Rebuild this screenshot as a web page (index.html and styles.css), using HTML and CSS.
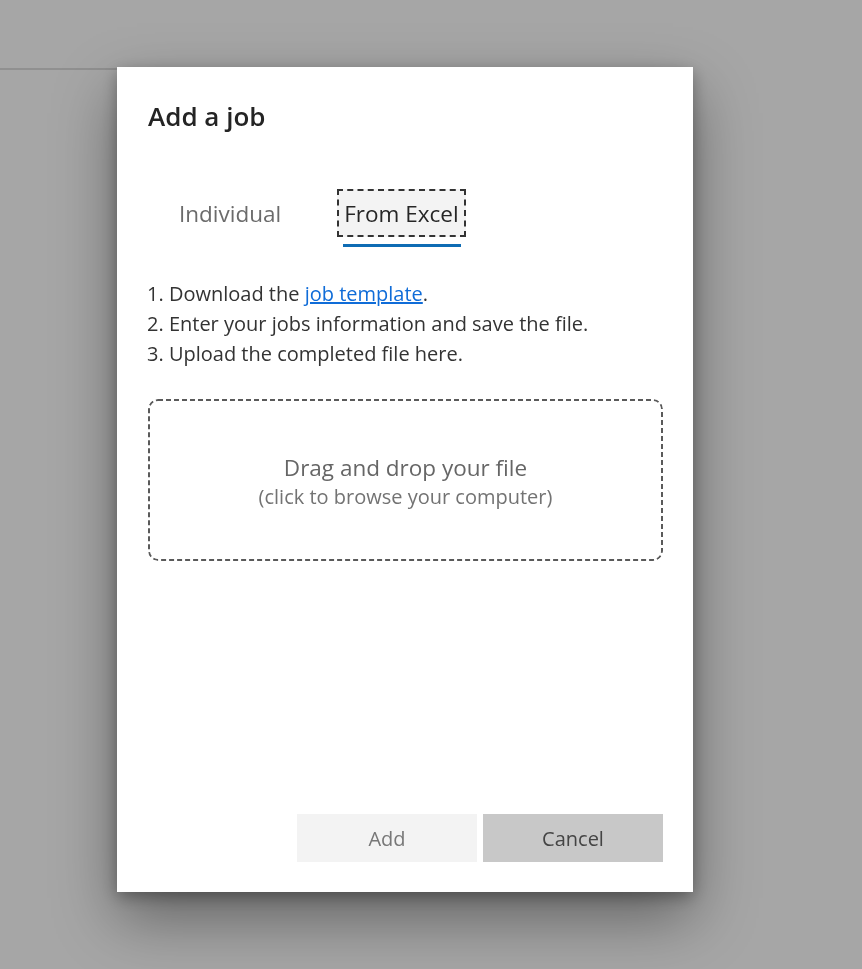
FILE: index.html
```html
<!DOCTYPE html>
<html lang="en">
<head>
<meta charset="utf-8">
<title>Add a job</title>
<link rel="stylesheet" href="styles.css">
</head>
<body>
  <div class="page">
    <div class="page-header"></div>
  </div>
  <div class="overlay">
    <div class="dialog" role="dialog" aria-labelledby="dlg-title">
      <h1 class="dialog-title" id="dlg-title">Add a job</h1>
      <div class="tabs" role="tablist">
        <button class="tab" role="tab">Individual</button>
        <button class="tab tab-active" role="tab">From Excel</button>
      </div>
      <ol class="steps">
        <li>1. Download the <a href="#" class="link">job template</a>.</li>
        <li>2. Enter your jobs information and save the file.</li>
        <li>3. Upload the completed file here.</li>
      </ol>
      <div class="dropzone">
        <div class="dz-main">Drag and drop your file</div>
        <div class="dz-sub">(click to browse your computer)</div>
      </div>
      <div class="actions">
        <button class="btn btn-add" disabled>Add</button>
        <button class="btn btn-cancel">Cancel</button>
      </div>
    </div>
  </div>
</body>
</html>
```

FILE: styles.css
```css
* { box-sizing: border-box; }

html, body {
  margin: 0;
  height: 100%;
}

body {
  font-family: "Open Sans", "Noto Sans", sans-serif;
  background: #a6a6a6;
  overflow: hidden;
}

/* page underneath the modal */
.page {
  height: 100%;
}

.page-header {
  width: 120px;
  height: 70px;
  border-bottom: 2px solid #909090;
}

/* modal layer */
.overlay {
  position: fixed;
  inset: 0;
}

.dialog {
  position: absolute;
  left: 117px;
  top: 67px;
  width: 576px;
  height: 825px;
  background: #fff;
  padding: 27px 30px 30px 31px;
  display: flex;
  flex-direction: column;
  box-shadow: 0 26px 58px rgba(0, 0, 0, 0.4), 0 5px 15px rgba(0, 0, 0, 0.3);
}

.dialog-title {
  margin: 0;
  font-size: 26px;
  font-weight: 600;
  line-height: 44px;
  color: #242424;
}

.tabs {
  display: flex;
  gap: 49px;
  margin: 51px 0 0 24px;
}

.tab {
  position: relative;
  font: inherit;
  font-size: 22.5px;
  color: #6b6b6b;
  background: transparent;
  border: 2px solid transparent;
  height: 48px;
  padding: 0 5px;
  cursor: pointer;
}

.tab-active {
  color: #262626;
  background: #f3f3f3;
  border: 2px dashed #333;
}

.tab-active::after {
  content: "";
  position: absolute;
  left: 4px;
  right: 3px;
  bottom: -12px;
  height: 3px;
  background: #0f6cb4;
}

.steps {
  list-style: none;
  margin: 42px 0 0 -1px;
  padding: 0;
  font-size: 20px;
  line-height: 30px;
  color: #333;
}

.link {
  color: #0f6cd8;
  text-decoration: underline;
}

/* dashed outline drawn as svg so the dash rhythm stays tight */
.dropzone {
  margin-top: 30px;
  height: 162px;
  border-radius: 10px;
  background: url("data:image/svg+xml,%3Csvg xmlns='http://www.w3.org/2000/svg' width='515' height='162'%3E%3Crect x='1' y='1' width='513' height='160' rx='9' ry='9' fill='none' stroke='%235a5a5a' stroke-width='2' stroke-dasharray='5 3'/%3E%3C/svg%3E") no-repeat 0 0 / 100% 100%;
  display: flex;
  flex-direction: column;
  align-items: center;
  justify-content: center;
  color: #666;
  padding-top: 3px;
}

.dz-main {
  font-size: 22.5px;
  line-height: 30px;
}

.dz-sub {
  font-size: 20px;
  line-height: 28px;
  color: #737373;
}

.actions {
  margin-top: auto;
  display: flex;
  justify-content: flex-end;
  gap: 6px;
}

.btn {
  width: 180px;
  height: 48px;
  border: none;
  font: inherit;
  font-size: 20px;
}

.btn-add {
  background: #f3f3f3;
  color: #777;
}

.btn-cancel {
  background: #c8c8c8;
  color: #444;
  cursor: pointer;
}
```
